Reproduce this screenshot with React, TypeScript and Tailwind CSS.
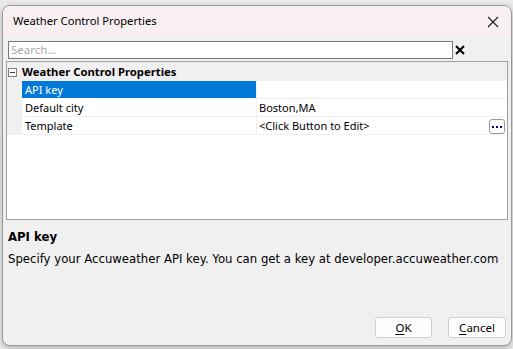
import React from "react";

export default function App() {
  const rows = [
    { name: "API key", value: "", selected: true },
    { name: "Default city", value: "Boston,MA" },
    { name: "Template", value: "<Click Button to Edit>", button: true },
  ];
  return (
    <div className="w-[513px] h-[349px] bg-[#ebebeb] pt-[5px] pl-[2px] overflow-hidden" style={{ fontFamily: "'Noto Sans', sans-serif" }}>
      <div className="w-[510px] h-[341px] rounded-[8px] border border-[#9a9a9a] bg-[#f0f0f0] overflow-hidden flex flex-col shadow-[0_2px_6px_rgba(0,0,0,0.25)]">
        {/* title bar */}
        <div className="h-[31px] bg-[#f7eff1] flex items-center justify-between pl-[10px] pr-[9px] shrink-0">
          <span className="text-[11.2px] text-black">Weather Control Properties</span>
          <svg width="12" height="12" viewBox="0 0 12 12" className="mr-[3px]">
            <path d="M1 1 L11 11 M11 1 L1 11" stroke="#1a1a1a" strokeWidth="1.1" />
          </svg>
        </div>
        {/* search */}
        <div className="flex items-center mt-[4px] pl-[5px] h-[18px]">
          <div className="w-[445px] h-[18px] bg-white border border-[#7a7a7a] flex items-center pl-[2px]">
            <span className="text-[11.5px] text-[#a9a9a9] leading-none">Search...</span>
          </div>
          <svg width="10" height="10" viewBox="0 0 10 10" className="ml-[2px]">
            <path d="M1 1 L9 9 M9 1 L1 9" stroke="#000" strokeWidth="2" />
          </svg>
        </div>
        {/* grid */}
        <div className="mt-[2px] ml-[3px] w-[502px] h-[159px] border border-[#a0a0a0] bg-white flex flex-col">
          <div className="h-[19px] bg-[#f0f0f0] flex items-center shrink-0">
            <div className="w-[15px] flex pl-[1px] pt-[1px]">
              <div className="w-[9px] h-[9px] border border-[#808080] bg-white flex items-center justify-center">
                <div className="w-[5px] h-[1px] bg-[#404040]" />
              </div>
            </div>
            <span className="text-[11.3px] font-bold text-black pt-[1px]">Weather Control Properties</span>
          </div>
          {rows.map((r) => (
            <div key={r.name} className="h-[18px] flex shrink-0">
              <div className="w-[15px] bg-[#f0f0f0]" />
              <div className={`w-[234px] flex items-center pl-[3px] border-b ${r.selected ? "bg-[#0078d7] text-white border-white" : "text-black border-[#f0f0f0]"}`}>
                <span className="text-[11px] pt-[1px]">{r.name}</span>
              </div>
              <div className="w-[1px] bg-[#f0f0f0]" />
              <div className="flex-1 flex items-center justify-between pl-[2px] border-b border-[#f0f0f0] pr-[2px]">
                <span className="text-[11px] text-black pt-[1px]">{r.value}</span>
                {r.button && (
                  <div className="w-[16px] h-[15px] border border-[#9a9a9a] rounded-[3px] bg-white flex items-center justify-center pt-[2px] gap-[2px] mt-[1px]">
                    <div className="w-[2px] h-[2px] bg-[#000080]" />
                    <div className="w-[2px] h-[2px] bg-[#000080]" />
                    <div className="w-[2px] h-[2px] bg-[#000080]" />
                  </div>
                )}
              </div>
            </div>
          ))}
          <div className="flex-1" />
        </div>
        {/* description */}
        <div className="pl-[5px] mt-[10px]" style={{ fontFamily: "'DejaVu Sans', Verdana, sans-serif" }}>
          <div className="text-[11.7px] font-bold text-black leading-[14px]">API key</div>
          <div className="text-[11.7px] text-black leading-[14px] mt-[8px]">Specify your Accuweather API key. You can get a key at developer.accuweather.com</div>
        </div>
        <div className="flex-1" />
        {/* buttons */}
        <div className="flex justify-end gap-[16px] pr-[5px] pb-[7px]">
          <button className="w-[57px] h-[21px] bg-[#fdfdfd] border border-[#d0d0d0] rounded-[3px] text-[11.5px] text-black">
            <span className="underline underline-offset-2">O</span>K
          </button>
          <button className="w-[58px] h-[21px] bg-[#fdfdfd] border border-[#d0d0d0] rounded-[3px] text-[11.5px] text-black">
            <span className="underline underline-offset-2">C</span>ancel
          </button>
        </div>
      </div>
    </div>
  );
}
